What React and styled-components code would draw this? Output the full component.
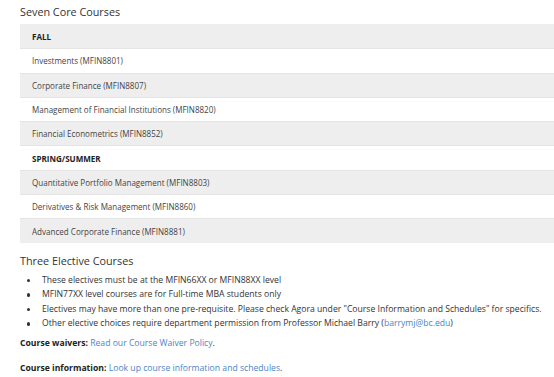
import React from 'react';
import styled, { createGlobalStyle } from 'styled-components';

const GlobalStyle = createGlobalStyle`
  html, body {
    margin: 0;
    padding: 0;
    background: #fff;
  }
  body {
    font-family: "Open Sans", "Liberation Sans", sans-serif;
    color: #333;
  }
`;

const Page = styled.div`
  padding: 3px 0 0 20px;
  overflow: hidden;
`;

const Heading = styled.h3`
  margin: 0;
  font-size: 10.8px;
  font-weight: 400;
  line-height: 18px;
  color: #333;
  margin-bottom: ${p => p.$gap || 3}px;
`;

const Table = styled.div`
  display: flex;
  flex-direction: column;
  width: 560px;
  margin-bottom: 9px;
`;

const Row = styled.div`
  height: 24.3px;
  display: flex;
  align-items: center;
  padding-left: 12px;
  box-sizing: border-box;
  border-top: 1px solid ${p => (p.$first ? 'transparent' : '#e4e4e4')};
  background: ${p => (p.$shade ? '#eeeeee' : '#fff')};
  font-size: 8.05px;
  font-weight: ${p => (p.$head ? 700 : 400)};
  color: ${p => (p.$head ? '#222' : '#444')};
`;

const List = styled.ul`
  margin: 0 0 5px 0;
  padding: 0 0 0 22px;
  list-style: none;
  font-size: 8.65px;
  line-height: 14.6px;
  color: #333;
`;

const Item = styled.li`
  white-space: nowrap;
  &::before {
    content: '';
    display: inline-block;
    width: 3.5px;
    height: 3.5px;
    border-radius: 50%;
    background: #333;
    margin-left: -15.5px;
    margin-right: 12px;
    vertical-align: middle;
  }
`;

const Note = styled.p`
  margin: 0 0 ${p => p.$gap || 0}px 0;
  font-size: 8.65px;
  line-height: 14px;
  color: #333;
`;

const Label = styled.strong`
  font-weight: 700;
  color: #222;
`;

const Link = styled.a`
  color: #4a86c5;
  text-decoration: none;
`;

const rows = [
  { text: 'FALL', head: true },
  { text: 'Investments (MFIN8801)' },
  { text: 'Corporate Finance (MFIN8807)' },
  { text: 'Management of Financial Institutions (MFIN8820)' },
  { text: 'Financial Econometrics (MFIN8852)' },
  { text: 'SPRING/SUMMER', head: true },
  { text: 'Quantitative Portfolio Management (MFIN8803)' },
  { text: 'Derivatives & Risk Management (MFIN8860)' },
  { text: 'Advanced Corporate Finance (MFIN8881)' },
];

export default function App() {
  return (
    <>
      <GlobalStyle />
      <Page>
        <Heading>Seven Core Courses</Heading>
        <Table>
          {rows.map((r, i) => (
            <Row key={r.text} $first={i === 0} $shade={i % 2 === 0} $head={r.head}>
              {r.text}
            </Row>
          ))}
        </Table>
        <Heading>Three Elective Courses</Heading>
        <List>
          <Item>These electives must be at the MFIN66XX or MFIN88XX level</Item>
          <Item>MFIN77XX level courses are for Full-time MBA students only</Item>
          <Item>
            Electives may have more than one pre-requisite. Please check Agora under "Course
            Information and Schedules" for specifics.
          </Item>
          <Item>
            Other elective choices require department permission from Professor Michael Barry (
            <Link href="#">barrymj@bc.edu</Link>)
          </Item>
        </List>
        <Note $gap={11}>
          <Label>Course waivers:</Label> <Link href="#">Read our Course Waiver Policy</Link>.
        </Note>
        <Note>
          <Label>Course information:</Label>{' '}
          <Link href="#">Look up course information and schedules</Link>.
        </Note>
      </Page>
    </>
  );
}
